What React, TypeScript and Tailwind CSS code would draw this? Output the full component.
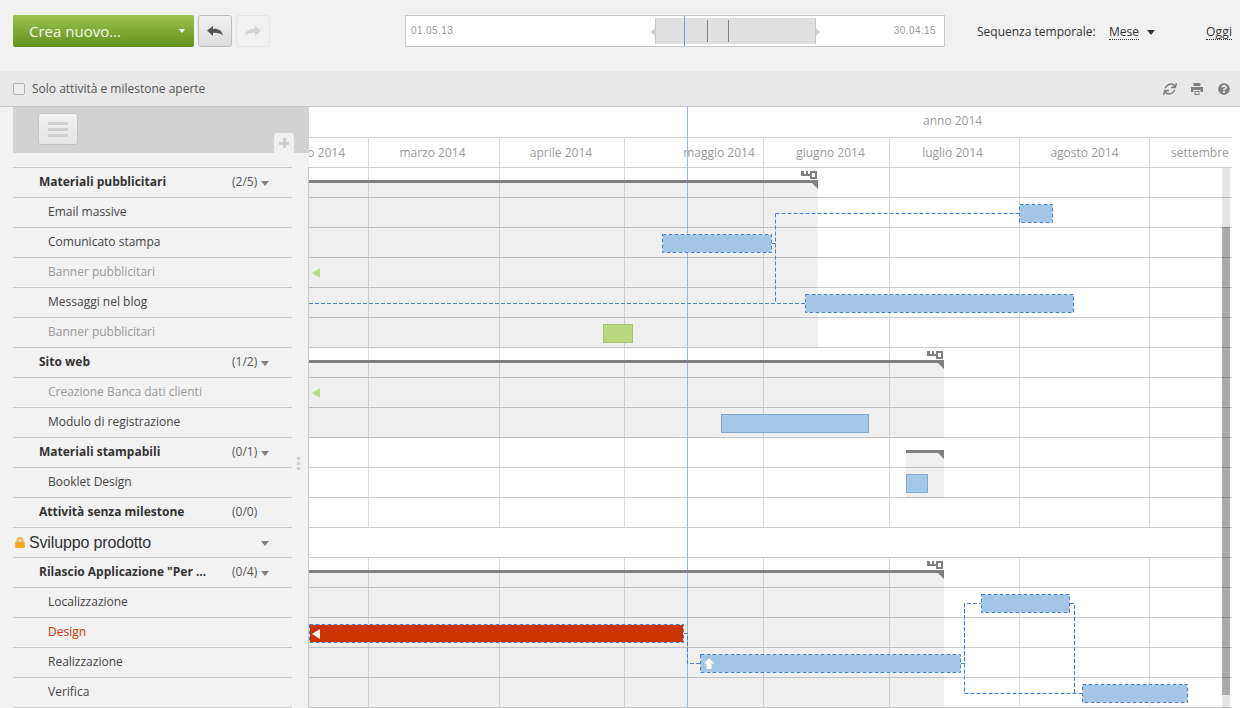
import { FaLock, FaQuestionCircle, FaSync } from "react-icons/fa";

type Row = { t: string; k: "m" | "t" | "g" | "r" | "p"; c?: string; caret?: boolean };
const rows: Row[] = [
  { t: "Materiali pubblicitari", k: "m", c: "(2/5)", caret: true },
  { t: "Email massive", k: "t" },
  { t: "Comunicato stampa", k: "t" },
  { t: "Banner pubblicitari", k: "g" },
  { t: "Messaggi nel blog", k: "t" },
  { t: "Banner pubblicitari", k: "g" },
  { t: "Sito web", k: "m", c: "(1/2)", caret: true },
  { t: "Creazione Banca dati clienti", k: "g" },
  { t: "Modulo di registrazione", k: "t" },
  { t: "Materiali stampabili", k: "m", c: "(0/1)", caret: true },
  { t: "Booklet Design", k: "t" },
  { t: "Attività senza milestone", k: "m", c: "(0/0)" },
  { t: "Sviluppo prodotto", k: "p", caret: true },
  { t: 'Rilascio Applicazione "Per ...', k: "m", c: "(0/4)", caret: true },
  { t: "Localizzazione", k: "t" },
  { t: "Design", k: "r" },
  { t: "Realizzazione", k: "t" },
  { t: "Verifica", k: "t" },
];

const cellW = [60, 131, 125, 139, 126, 130, 130, 82];
const X0 = 309;
const Y0 = 168;

const shades = [
  [309, 180, 509, 168],
  [309, 360, 635, 78],
  [906, 450, 38, 48],
  [309, 570, 635, 138],
];
const dashed = [
  [1019, 204, 34, 19, 0],
  [662, 234, 110, 19, 0],
  [805, 294, 269, 19, 0],
  [981, 594, 89, 19, 0],
  [700, 654, 261, 19, 1],
  [1082, 684, 106, 19, 0],
];
const milestones: [number, number, number, boolean][] = [
  [309, 180, 509, true],
  [309, 360, 635, true],
  [906, 450, 38, false],
  [309, 570, 635, true],
];
const links = [
  "M772 243.5H775.5M775.5 213.5V303.5M775.5 213.5H1019M309 303.5H805",
  "M684 633.5H687.5V663.5H700",
  "M961 663.5H964.5V603.5H981M964.5 603.5V693.5H1082M1070 603.5H1074.5V693.5",
];

function Caret() {
  return <div className="h-0 w-0 border-x-4 border-t-[5px] border-x-transparent border-t-[#808080]" />;
}

function Key() {
  return (
    <svg width="16" height="8" viewBox="0 0 16 8" className="absolute right-px -top-[9px] fill-[#808080]">
      <path d="M0 0H3V3H5V0H7V3H9V0H16V8H9V5H0ZM11 2V6H14V2Z" fillRule="evenodd" />
    </svg>
  );
}

function DashedFrame({ w, h }: { w: number; h: number }) {
  return (
    <svg width={w} height={h} className="absolute left-0 top-0 fill-none stroke-[#4a80c8]">
      <rect x="0.5" y="0.5" width={w - 1} height={h - 1} strokeDasharray="4 2" />
    </svg>
  );
}

function SideRow({ r }: { r: Row }) {
  if (r.k === "p") {
    return (
      <div className="flex h-[30px] items-center border-b border-[#c9c9c9] pl-[2px]">
        <FaLock className="h-[11px] w-[10px] text-[#f5a623]" />
        <span className="ml-[4px] font-['Liberation_Sans'] text-[16px] tracking-[-0.15px] text-[#333]">{r.t}</span>
        <div className="ml-auto mr-[23px] mt-[1px]"><Caret /></div>
      </div>
    );
  }
  if (r.k === "m") {
    return (
      <div className="flex h-[30px] items-center border-b border-[#c9c9c9] pb-[2px] pl-[26px] text-[12px] text-[#333]">
        <span className="w-[193px] whitespace-nowrap font-bold">{r.t}</span>
        <span className="w-[29px] text-[#555]">{r.c}</span>
        {r.caret && <div className="mt-[3px]"><Caret /></div>}
      </div>
    );
  }
  const color = r.k === "g" ? "text-[#999]" : r.k === "r" ? "text-[#cc3300]" : "text-[#444]";
  return (
    <div className={`flex h-[30px] items-center border-b border-[#c9c9c9] pb-[2px] pl-[35px] text-[12px] ${color}`}>
      {r.t}
    </div>
  );
}

export default function App() {
  return (
    <div className="h-[708px] w-[1240px] overflow-hidden bg-white font-['Open_Sans',sans-serif]">
      {/* top bar */}
      <div className="flex h-[71px] items-start bg-[#f1f1f1] pl-[13px] pt-[15px]">
        <button className="flex h-[32px] w-[181px] items-center rounded-[2px] bg-gradient-to-b from-[#9cc34f] to-[#62901a] pl-[16px] pr-[9px] text-[15px] text-[#f4f8e4]">
          <span>Crea nuovo...</span>
          <span className="ml-auto h-0 w-0 border-x-[3.5px] border-t-[4px] border-x-transparent border-t-white" />
        </button>
        <button className="ml-[4px] flex h-[32px] w-[34px] items-center justify-center rounded-[3px] border border-[#bdbdbd] bg-gradient-to-b from-[#f1f1f1] to-[#dcdcdc]">
          <svg width="16" height="10" viewBox="0 0 16 10" className="fill-[#555]"><path d="M0 4.5 6 0V2.8C11 2.3 15 4.2 16 9.5 13.5 7.3 10 6.5 6 7V10Z" /></svg>
        </button>
        <button className="ml-[4px] flex h-[32px] w-[34px] items-center justify-center rounded-[3px] border border-[#e4e4e4] bg-[#f1f1f1]">
          <svg width="16" height="10" viewBox="0 0 16 10" className="fill-[#d4d4d4]"><path d="M16 4.5 10 0V2.8C5 2.3 1 4.2 0 9.5 2.5 7.3 6 6.5 10 7V10Z" /></svg>
        </button>
        {/* range */}
        <div className="relative ml-[135px] flex h-[32px] w-[540px] items-center justify-between border border-[#c8c8c8] bg-white pb-[1px] pl-[5px] pr-[8px] font-['Liberation_Sans'] text-[10px] tracking-[0.4px] text-[#999]">
          <span>01.05.13</span>
          <span>30.04.15</span>
          <div className="absolute left-[249px] top-[2px] h-[26px] w-[161px] border-x border-[#c8c8c8] bg-[#e0e0e0]" />
          <div className="absolute left-[245px] top-[12px] h-0 w-0 border-y-[4px] border-r-[4px] border-y-transparent border-r-[#ccc]" />
          <div className="absolute left-[410px] top-[12px] h-0 w-0 border-y-[4px] border-l-[4px] border-y-transparent border-l-[#ccc]" />
          <div className="absolute left-[278px] top-0 h-[30px] w-px bg-[#6d9eeb]" />
          <div className="absolute left-[301px] top-[4px] h-[22px] w-px bg-[#808080]" />
          <div className="absolute left-[322px] top-[4px] h-[22px] w-px bg-[#808080]" />
        </div>
        <div className="ml-[32px] flex h-[32px] items-center pt-[2px] text-[12px] text-[#333]">
          <span className="w-[132px]">Sequenza temporale:</span>
          <span className="border-b border-dotted border-[#333] leading-[15px]">Mese</span>
          <span className="ml-[8px] h-0 w-0 border-x-4 border-t-[5px] border-x-transparent border-t-[#333]" />
          <span className="ml-[51px] border-b border-dotted border-[#333] leading-[15px] tracking-[0.2px]">Oggi</span>
        </div>
      </div>
      {/* filter bar */}
      <div className="flex h-[36px] items-center border-b border-[#c8c8c8] bg-[#e8e8e8] pl-[13px] pr-[10px]">
        <span className="h-[12px] w-[12px] rounded-[2px] border border-[#b0b0b0] bg-[#eeeeee]" />
        <span className="ml-[7px] text-[12px] text-[#555]">Solo attività e milestone aperte</span>
        <div className="ml-auto flex items-center gap-[15px] text-[#808080]">
          <FaSync className="h-[12px] w-[12px] -skew-x-12" />
          <svg width="12" height="12" viewBox="0 0 12 12" className="fill-[#808080]">
            <path d="M2.5 0H9.5V3H2.5ZM0 4H12V9H9.5V7H2.5V9H0ZM3.5 8H8.5V12H3.5ZM4.5 9V11H7.5V9Z" fillRule="evenodd" />
          </svg>
          <FaQuestionCircle className="h-[12px] w-[12px]" />
        </div>
      </div>
      {/* main */}
      <div className="flex h-[601px]">
        {/* sidebar */}
        <div className="relative w-[309px] shrink-0 bg-[#f2f2f2]">
          <div className="ml-[13px] h-[46px] bg-[#d2d2d2] pl-[25px] pt-[6px]">
            <div className="flex h-[32px] w-[40px] flex-col items-center justify-center gap-[3px] rounded-[3px] border border-[#c4c4c4] bg-gradient-to-b from-[#f2f2f2] to-[#e4e4e4]">
              <span className="h-[3px] w-[20px] bg-[#d0d0d0]" />
              <span className="h-[3px] w-[20px] bg-[#d0d0d0]" />
              <span className="h-[3px] w-[20px] bg-[#d0d0d0]" />
            </div>
          </div>
          <div className="absolute left-[274px] top-[26px] flex h-[20px] w-[20px] items-center justify-center rounded-t-[2px] bg-[#efefef]">
            <span className="relative h-[10px] w-[10px]">
              <span className="absolute left-[3.5px] top-0 h-[10px] w-[3px] bg-[#cccccc]" />
              <span className="absolute left-0 top-[3.5px] h-[3px] w-[10px] bg-[#cccccc]" />
            </span>
          </div>
          <div className="absolute left-[297px] top-[350px] flex flex-col gap-[2px]">
            <span className="h-[3px] w-[3px] bg-[#cfcfcf]" />
            <span className="h-[3px] w-[3px] bg-[#cfcfcf]" />
            <span className="h-[3px] w-[3px] bg-[#cfcfcf]" />
          </div>
          <div className="mt-[14px] h-[541px] border-r border-[#c9c9c9] pl-[13px]">
            <div className="w-[279px] border-t border-[#c9c9c9]">
              {rows.map((r, i) => <SideRow key={i} r={r} />)}
            </div>
          </div>
        </div>
        {/* chart */}
        <div className="relative w-[923px] shrink-0">
          <div className="h-[31px] border-b border-[#d0d0d0] pl-[614px] pt-[5px] text-[12px] text-[#999]">anno 2014</div>
          <div className="flex h-[30px] border-b border-[#d0d0d0] text-[12px] leading-[29px] text-[#999]">
            <div className="flex w-[60px] justify-end overflow-hidden whitespace-nowrap border-r border-[#d8d8d8] pr-[23px]">febbraio 2014</div>
            <div className="w-[131px] border-r border-[#d8d8d8] pr-[3px] text-center">marzo 2014</div>
            <div className="w-[125px] border-r border-[#d8d8d8] pr-[2px] text-center">aprile 2014</div>
            <div className="w-[139px] border-r border-[#d8d8d8] pl-[50px] text-center">maggio 2014</div>
            <div className="w-[126px] border-r border-[#d8d8d8] pl-[8px] text-center">giugno 2014</div>
            <div className="w-[130px] border-r border-[#d8d8d8] pr-[4px] text-center">luglio 2014</div>
            <div className="w-[130px] border-r border-[#d8d8d8] text-center">agosto 2014</div>
            <div className="flex-1 overflow-hidden whitespace-nowrap pl-[21px]">settembre 2014</div>
          </div>
          <div className="relative h-[540px]">
            {shades.map(([x, y, w, h], i) => (
              <div key={i} className="absolute bg-[#efefef]" style={{ left: x - X0, top: y - Y0, width: w, height: h }} />
            ))}
            <div className="absolute left-[913px] top-0 h-[540px] w-[8px] bg-[#e5e5e5]" />
            <div className="absolute left-[913px] top-[59px] h-[468px] w-[8px] bg-[#aaaaaa]" />
            {rows.map((r, i) => (
              <div key={i} className="relative flex h-[30px] border-b border-[#00000033]">
                {r.k !== "p" && cellW.slice(0, 7).map((w, j) => (
                  <div key={j} className="h-full border-r border-[#00000026]" style={{ width: w }} />
                ))}
              </div>
            ))}
            <div className="absolute left-[378px] -top-[61px] h-[601px] w-px bg-[#9db4e6]" />
            <svg width="923" height="540" viewBox="309 168 923 540" className="absolute left-0 top-0 fill-none stroke-[#4a80c8]">
              {links.map((d, i) => <path key={i} d={d} strokeDasharray="4 2" />)}
            </svg>
            {milestones.map(([x, y, w, key], i) => (
              <div key={i} className="absolute h-[3px] bg-[#808080]" style={{ left: x - X0, top: y - Y0, width: w }}>
                {key && <Key />}
                <div className="absolute right-0 top-[3px] h-0 w-0 border-l-[6px] border-t-[6px] border-l-transparent border-t-[#808080]" />
              </div>
            ))}
            {dashed.map(([x, y, w, h, arrow], i) => (
              <div key={i} className="absolute flex items-center bg-white p-px" style={{ left: x - X0, top: y - Y0, width: w, height: h }}>
                <div className="flex h-full w-full items-center bg-[#a4c6e6] pl-[3px]">
                  {arrow === 1 && (
                    <svg width="10" height="11" viewBox="0 0 10 11" className="fill-white"><path d="M5 0 10 5.5H7.5V11H2.5V5.5H0Z" /></svg>
                  )}
                </div>
                <DashedFrame w={w} h={h} />
              </div>
            ))}
            {/* Design */}
            <div className="absolute left-0 top-[456px] flex h-[19px] w-[375px] items-center bg-white p-px">
              <div className="flex h-full w-full items-center bg-[#cc3300] pl-[2px]">
                <div className="h-0 w-0 border-y-[5px] border-r-[8px] border-y-transparent border-r-white" />
              </div>
              <DashedFrame w={375} h={19} />
            </div>
            {/* solid bars */}
            <div className="absolute left-[412px] top-[246px] h-[19px] w-[148px] border border-[#84a8c8] bg-[#a4c8e8]" />
            <div className="absolute left-[597px] top-[306px] h-[19px] w-[22px] border border-[#84a8c8] bg-[#a4c8e8]" />
            <div className="absolute left-[294px] top-[156px] h-[19px] w-[30px] border border-[#a6c46a] bg-[#bcd87f]" />
            {/* green markers */}
            <div className="absolute left-[3px] top-[100px] h-0 w-0 border-y-[5px] border-r-[8px] border-y-transparent border-r-[#bcdc84]" />
            <div className="absolute left-[3px] top-[220px] h-0 w-0 border-y-[5px] border-r-[8px] border-y-transparent border-r-[#bcdc84]" />
          </div>
        </div>
      </div>
    </div>
  );
}
